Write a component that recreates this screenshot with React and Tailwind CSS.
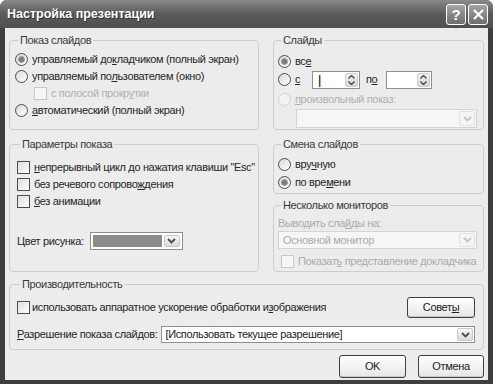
import React from "react";

const Radio = ({ checked, disabled }) => (
  <span
    className={`w-[13px] h-[13px] shrink-0 rounded-full border flex items-center justify-center ${
      disabled ? "border-[#cfcfcf] bg-[#f2f2f2]" : "border-[#4d4d4d] bg-gradient-to-br from-[#d8d8d8] to-white"
    }`}
  >
    {checked && <span className="w-[7px] h-[7px] rounded-full bg-[#7c7c7c] border border-[#9a9a9a]" />}
  </span>
);

const Check = ({ disabled }) => (
  <span
    className={`w-[13px] h-[13px] shrink-0 border ${
      disabled ? "border-[#c8c8c8] bg-[#f6f6f6]" : "border-[#4d4d4d] bg-gradient-to-br from-[#dedede] to-white"
    }`}
  />
);

const Chevron = ({ light }) => (
  <svg width="9" height="6" viewBox="0 0 9 6">
    <path d="M1 1 L4.5 4.5 L8 1" fill="none" stroke={light ? "#c4c4c4" : "#4a4a4a"} strokeWidth="1.8" />
  </svg>
);

const ArrowBtn = ({ light }) => (
  <span
    className={`w-[16px] h-full shrink-0 rounded-[2px] border flex items-center justify-center ${
      light ? "border-[#e2e2e2] bg-[#f4f4f4]" : "border-[#c9c9c9] bg-gradient-to-b from-[#f6f6f6] to-[#d9d9d9]"
    }`}
  >
    <Chevron light={light} />
  </span>
);

const Spin = ({ cursor }) => (
  <span className="h-[18px] border border-[#8f8f8f] bg-white flex items-stretch p-[1px]">
    <span className="flex-1 flex items-center pl-[4px] text-[13px] leading-none text-black">{cursor ? "|" : ""}</span>
    <span className="w-[13px] flex flex-col rounded-[2px] bg-gradient-to-b from-[#f2f2f2] to-[#d6d6d6] border border-[#cfcfcf]">
      <span className="flex-1 flex items-center justify-center">
        <svg width="7" height="4" viewBox="0 0 7 4"><path d="M0.5 3.5 L3.5 0.5 L6.5 3.5" fill="none" stroke="#444" strokeWidth="1.3" /></svg>
      </span>
      <span className="flex-1 flex items-center justify-center">
        <svg width="7" height="4" viewBox="0 0 7 4"><path d="M0.5 0.5 L3.5 3.5 L6.5 0.5" fill="none" stroke="#444" strokeWidth="1.3" /></svg>
      </span>
    </span>
  </span>
);

const Group = ({ title, className, children }) => (
  <fieldset className={`border border-[#cdcdcd] rounded-[4px] min-w-0 ${className}`}>
    <legend className="ml-[3px] px-[2px] text-[11px] leading-[13px] text-[#3a3a3a] whitespace-nowrap">{title}</legend>
    {children}
  </fieldset>
);

const Row = ({ h = "h-[17px]", className = "", children }) => (
  <div className={`${h} flex items-center gap-[4px] whitespace-nowrap ${className}`}>{children}</div>
);

const Btn = ({ children, className }) => (
  <button className={`rounded-[3px] border border-[#3f3f3f] bg-gradient-to-b from-white to-[#e6e6e6] text-[11px] text-[#222] shadow-[inset_0_-1px_0_#c9c9c9] ${className}`}>
    {children}
  </button>
);

export default function App() {
  return (
    <div className="w-[493px] h-[384px] bg-white font-['Liberation_Sans',Arial,sans-serif] text-[11px] tracking-[-0.35px] text-[#262626]">
      <div className="w-full h-full rounded-t-[7px] bg-[#3e3e3e] flex flex-col overflow-hidden">
        {/* title bar */}
        <div className="h-[28px] shrink-0 flex items-center justify-between pl-[7px] pr-[5px] bg-gradient-to-b from-[#8a8a8a] via-[#5a5a5a] to-[#505050]">
          <span className="text-white font-bold text-[12.5px] tracking-normal [text-shadow:1px_1px_0_#333]">
            Настройка презентации
          </span>
          <div className="flex gap-[2px]">
            <span className="w-[20px] h-[21px] rounded-[3px] border border-white bg-gradient-to-b from-[#a4a4a4] to-[#6e6e6e] flex items-center justify-center text-white font-bold text-[15px] leading-none">
              ?
            </span>
            <span className="w-[20px] h-[21px] rounded-[3px] border border-white bg-gradient-to-b from-[#a4a4a4] to-[#6e6e6e] flex items-center justify-center">
              <svg width="11" height="11" viewBox="0 0 11 11">
                <path d="M1 1 L10 10 M10 1 L1 10" stroke="white" strokeWidth="2.2" />
              </svg>
            </span>
          </div>
        </div>

        {/* body */}
        <div className="mx-[5px] h-[352px] bg-[#ececec] px-[4px] pt-[6px] flex flex-col">
          <div className="flex gap-[14px] h-[96px]">
            <Group title="Показ слайдов" className="w-[250px] pl-[5px] pt-[4px]">
              <Row>
                <Radio checked />
                <span>управляемый до<u>к</u>ладчиком (полный экран)</span>
              </Row>
              <Row>
                <Radio />
                <span>управляемый по<u>л</u>ьзователем (окно)</span>
              </Row>
              <Row className="pl-[19px]">
                <Check disabled />
                <span className="text-[#b0b0b0]">с полосой прокр<u>у</u>тки</span>
              </Row>
              <Row>
                <Radio />
                <span><u>а</u>втоматический (полный экран)</span>
              </Row>
            </Group>
            <Group title="Слайды" className="flex-1 pl-[4px] pr-[6px] pt-[6px]">
              <Row>
                <Radio checked />
                <span>вс<u>е</u></span>
              </Row>
              <Row h="h-[19px]">
                <Radio />
                <span className="w-[13px]"><u>с</u></span>
                <span className="w-[48px]"><Spin cursor /></span>
                <span className="w-[18px] pl-[2px]">п<u>о</u></span>
                <span className="w-[46px]"><Spin /></span>
              </Row>
              <Row className="mt-[2px]">
                <Radio disabled />
                <span className="text-[#b0b0b0]"><u>п</u>роизвольный показ:</span>
              </Row>
              <div className="mt-[1px] ml-[18px] h-[19px] border border-[#d4d4d4] bg-[#f6f6f6] p-[1px] flex justify-end">
                <ArrowBtn light />
              </div>
            </Group>
          </div>

          <div className="flex gap-[14px] h-[134px] mt-[8px]">
            <Group title="Параметры показа" className="w-[250px] pl-[7px] pt-[8px]">
              <Row>
                <Check />
                <span><u>н</u>епрерывный цикл до нажатия клавиши "Esc"</span>
              </Row>
              <Row>
                <Check />
                <span>без речевого сопрово<u>ж</u>дения</span>
              </Row>
              <Row>
                <Check />
                <span><u>б</u>ез анимации</span>
              </Row>
              <Row h="h-[18px]" className="mt-[22px]">
                <span>Цвет рисунка:</span>
                <span className="ml-[2px] w-[93px] h-full border border-[#8f8f8f] bg-white p-[2px] flex gap-[2px]">
                  <span className="flex-1 bg-[#8c8c8c]" />
                  <ArrowBtn />
                </span>
              </Row>
            </Group>
            <div className="flex-1 flex flex-col gap-[5px]">
              <Group title="Смена слайдов" className="h-[56px] pl-[4px] pt-[4px]">
                <Row h="h-[18px]">
                  <Radio />
                  <span>вру<u>ч</u>ную</span>
                </Row>
                <Row h="h-[18px]">
                  <Radio checked />
                  <span>по вре<u>м</u>ени</span>
                </Row>
              </Group>
              <Group title="Несколько мониторов" className="flex-1 pl-[4px] pr-[6px] pt-[4px] text-[#ababab]">
                <div className="h-[14px] flex items-center">
                  Выводить сла<u>й</u>ды на:
                </div>
                <div className="mt-[1px] h-[18px] border border-[#d4d4d4] bg-[#f6f6f6] p-[1px] flex items-center">
                  <span className="flex-1 pl-[3px]">Основной монитор</span>
                  <ArrowBtn light />
                </div>
                <Row h="h-[16px]" className="mt-[4px] pl-[3px] gap-[2px]">
                  <Check disabled />
                  <span>Показат<u>ь</u> представление докладчика</span>
                </Row>
              </Group>
            </div>
          </div>

          <Group title="Производительность" className="h-[72px] mt-[6px] pl-[7px] pr-[8px] pt-[5px]">
            <div className="h-[22px] flex items-center justify-between">
              <div className="flex items-center gap-[2px] whitespace-nowrap">
                <Check />
                <span>использовать аппаратное ускорение обработки и<u>з</u>ображения</span>
              </div>
              <Btn className="w-[68px] h-[21px]">
                Совет<u>ы</u>
              </Btn>
            </div>
            <Row className="mt-[8px]">
              <span><u>Р</u>азрешение показа слайдов:</span>
              <span className="flex-1 h-full border border-[#8f8f8f] bg-white p-[1px] flex items-center">
                <span className="flex-1 pl-[2px] text-[#222]">[Использовать текущее разрешение]</span>
                <ArrowBtn />
              </span>
            </Row>
          </Group>

          <div className="mt-[5px] flex justify-end gap-[12px]">
            <Btn className="w-[67px] h-[23px]">OK</Btn>
            <Btn className="w-[66px] h-[23px]">Отмена</Btn>
          </div>
        </div>
      </div>
    </div>
  );
}
